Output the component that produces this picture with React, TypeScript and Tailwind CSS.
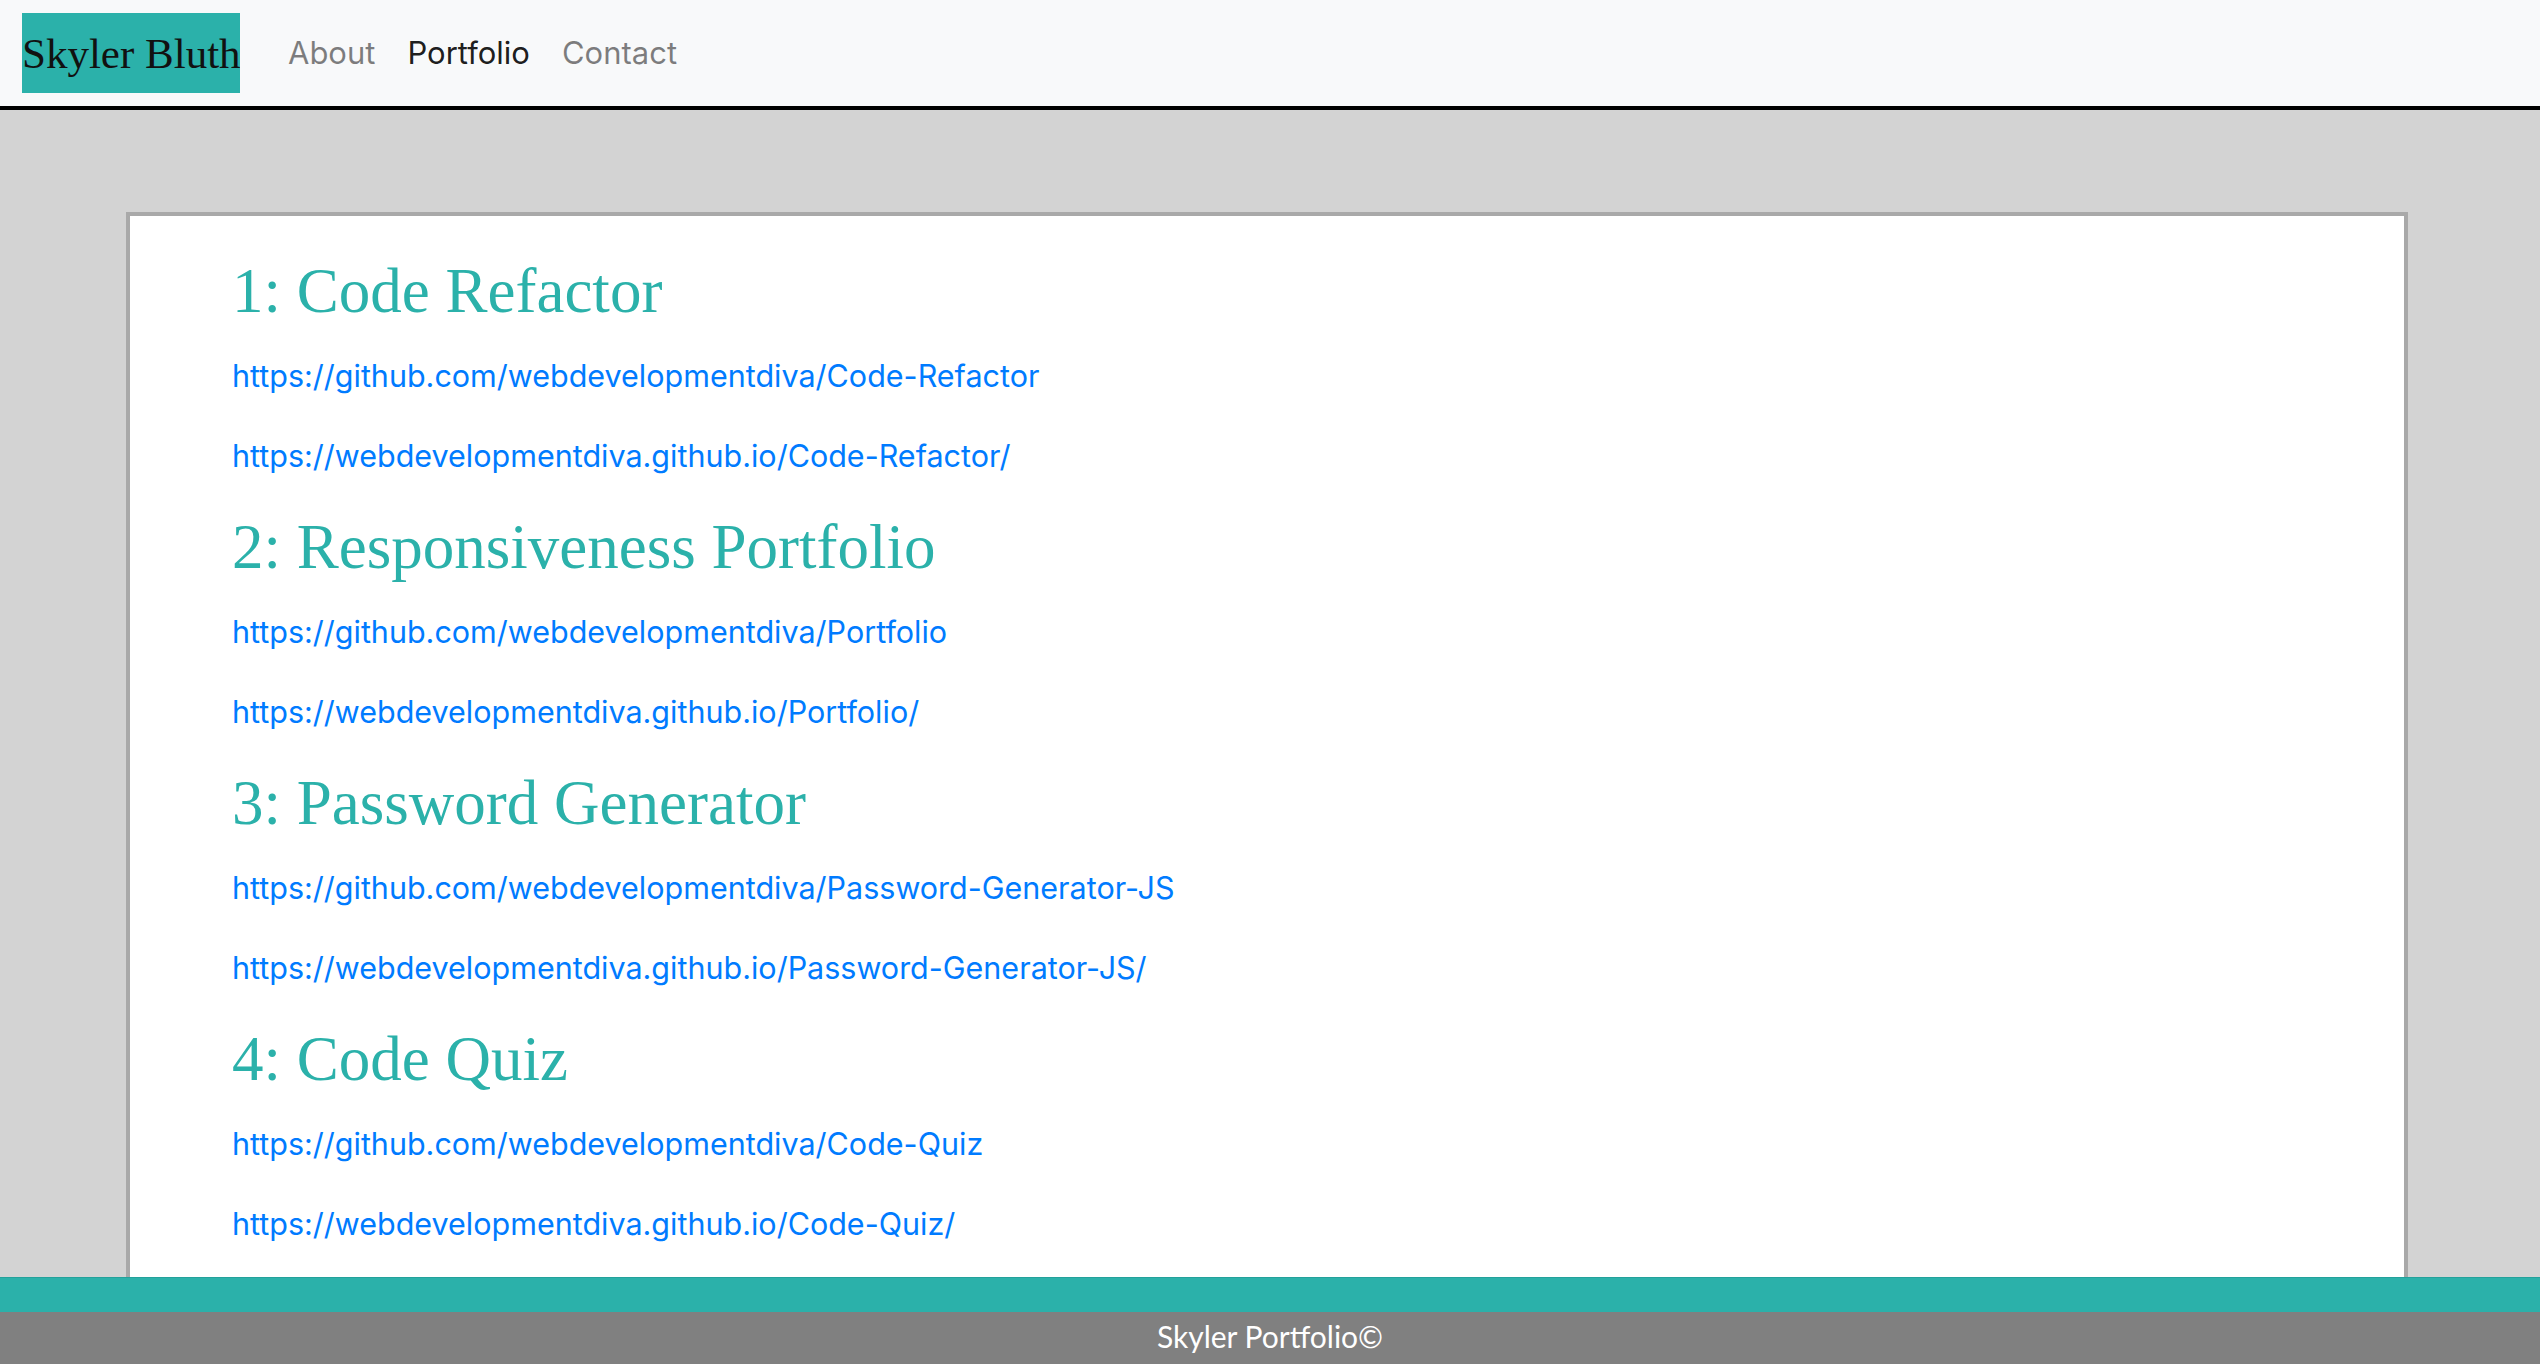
const projects = [
  {
    title: "1: Code Refactor",
    repo: "https://github.com/webdevelopmentdiva/Code-Refactor",
    site: "https://webdevelopmentdiva.github.io/Code-Refactor/",
  },
  {
    title: "2: Responsiveness Portfolio",
    repo: "https://github.com/webdevelopmentdiva/Portfolio",
    site: "https://webdevelopmentdiva.github.io/Portfolio/",
  },
  {
    title: "3: Password Generator",
    repo: "https://github.com/webdevelopmentdiva/Password-Generator-JS",
    site: "https://webdevelopmentdiva.github.io/Password-Generator-JS/",
  },
  {
    title: "4: Code Quiz",
    repo: "https://github.com/webdevelopmentdiva/Code-Quiz",
    site: "https://webdevelopmentdiva.github.io/Code-Quiz/",
  },
];

function Header() {
  return (
    <header className="shrink-0 h-[110px] bg-[#f8f9fa] border-b-4 border-black flex items-center pl-[22px]">
      <a
        href="#"
        className="w-[218px] h-[80px] bg-[#2bb1aa] flex items-center overflow-hidden whitespace-nowrap text-[43px] leading-none text-[#111] font-['Liberation_Serif',serif] mr-[32px]"
      >
        Skyler Bluth
      </a>
      <nav className="flex items-center text-[31px] font-['Inter',sans-serif]">
        <a href="#" className="px-4 text-black/50">About</a>
        <a href="#" className="px-4 text-black/90">Portfolio</a>
        <a href="#" className="px-4 text-black/50">Contact</a>
      </nav>
    </header>
  );
}

export default function App() {
  return (
    <div className="h-screen flex flex-col overflow-hidden bg-[#d3d3d3]">
      <Header />

      <main className="flex-1 min-h-0 overflow-hidden pt-[102px]">
        <div className="ml-[126px] w-[2282px] bg-white border-4 border-[#a9a9a9] pl-[102px] pt-[40px] pb-10">
          {projects.map((p) => (
            <section key={p.title}>
              <h2 className="text-[63px] leading-[70px] mb-[26px] text-[#2bb1aa] font-['Liberation_Serif',serif]">
                {p.title}
              </h2>
              <p className="text-[30.5px] leading-[48px] mb-[32px] font-['Inter',sans-serif]">
                <a href="#" className="text-[#007bff]">{p.repo}</a>
              </p>
              <p className="text-[30.5px] leading-[48px] mb-[32px] font-['Inter',sans-serif]">
                <a href="#" className="text-[#007bff]">{p.site}</a>
              </p>
            </section>
          ))}
        </div>
      </main>

      <footer className="shrink-0">
        <div className="h-[35px] bg-[#2bb1aa] border-t border-[#24a19b]" />
        <div className="h-[52px] bg-[#808080] flex justify-center pt-[5px] text-white text-[30px] leading-[38px] font-['Lato',sans-serif]">
          Skyler Portfolio©
        </div>
      </footer>
    </div>
  );
}
